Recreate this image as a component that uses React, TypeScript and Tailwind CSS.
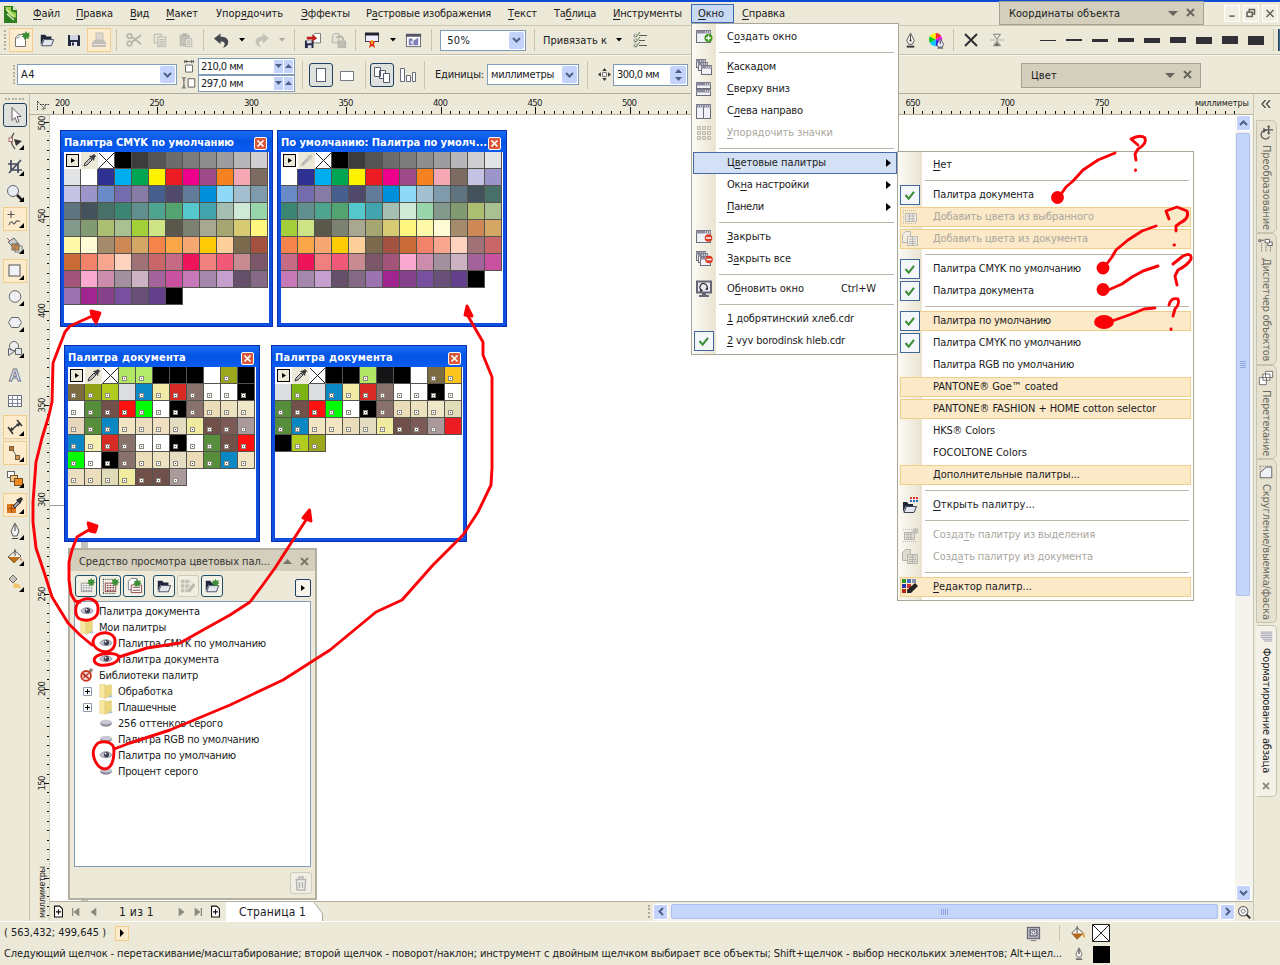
import { useLayoutEffect, useRef, type ReactNode } from "react";

/* ---------- text ---------- */

// "&" marks the access key: the letter after it is underlined.
function marked(s: string): ReactNode {
  const i = s.indexOf("&");
  if (i < 0) return s;
  return (
    <>
      {s.slice(0, i)}
      <span className="underline underline-offset-2 decoration-1">{s[i + 1]}</span>
      {s.slice(i + 2)}
    </>
  );
}

// A label whose letters are spaced to run over exactly `w` pixels.
function T({ s, w, vertical = false, className = "" }: { s: string; w: number; vertical?: boolean; className?: string }) {
  const ref = useRef<HTMLSpanElement>(null);
  useLayoutEffect(() => {
    const el = ref.current;
    if (!el) return;
    el.style.letterSpacing = "0px";
    const box = el.getBoundingClientRect();
    const size = vertical ? box.height : box.width;
    el.style.letterSpacing = (w - size) / (el.textContent || " ").length + "px";
  }, [s, w, vertical]);
  return (
    <span ref={ref} className={"inline-block shrink-0 whitespace-pre " + className}>
      {marked(s)}
    </span>
  );
}

/* ---------- icons, 18 x 18 ---------- */

const star = (x: number, y: number) => (
  <path d={`M${x} ${y - 4}l1.2 2.2 2.4-.6-.6 2.4 1.6 1-2.2.8.2 2.4-2.4-1-2 1.6-.4-2.4-2.4-.6 1.8-1.6-.8-2.2 2.4.2z`} fill="#3f8f3a" />
);
const win = (x: number, y: number, w: number, h: number) => (
  <>
    <rect x={x + 0.5} y={y + 0.5} width={w} height={h} fill="#f1f1f8" stroke="#6c6c7c" />
    <path d={`M${x} ${y + 2}h${w + 1}`} stroke="#8a8a9c" strokeWidth="3" />
    <path d={`M${x + w - 5} ${y + 2}h5`} stroke="#fff" strokeDasharray="1 1" />
  </>
);
const corner = <path d="M18 13v5h-5z" fill="#000" />;
const palGrid = (c: string) => (
  <>
    <rect x="3.5" y="6.5" width="11" height="9" fill="#fff" stroke={c} />
    <path d="M5 9h8M5 11.5h8M5 14h8" stroke={c} strokeWidth="1.6" strokeDasharray="2 1" />
  </>
);
const folderPath = (
  <>
    <path d="M2 15V3h5l1.5 2H14v3H5z" fill="#20263c" />
    <path d="M5.5 8.5h11L14 15.500H3z" fill="#e4e6ee" stroke="#3c4258" />
  </>
);
const docs = (c: string, f: string) => (
  <>
    <path d="M1.500 4.500l3-3h5v11h-8z" fill={f} stroke={c} />
    <path d="M6.500 6.500h10v9h-10zM8 9h7M8 11.500h7M8 13.500h7M11.500 7v8" fill={f} stroke={c} />
  </>
);

const ICONS: Record<string, ReactNode> = {
  logo: (
    <>
      <path d="M3 1h9l4 4v13H3z" fill="#2f7d23" />
      <path d="M4 2h6v4l5 2v5L8 10z" fill="#9ed04c" />
      <path d="M5 4l8 8M6 9l7 6" stroke="#dff3b8" strokeWidth="1.4" />
      <path d="M12 1l4 4h-4z" fill="#d9eccb" />
    </>
  ),
  newDoc: (
    <>
      <path d="M3.500 6.500l3-3h7v12h-10z" fill="#fff" stroke="#777" />
      <path d="M3.500 7h3.500V3.500" fill="none" stroke="#999" />
      {star(14, 4)}
    </>
  ),
  open: folderPath,
  save: (
    <>
      <path d="M3 4h11l1 1v10H3z" fill="#23283f" />
      <rect x="5" y="4" width="8" height="5" fill="#cfd3e2" />
      <rect x="6" y="11" width="6" height="4" fill="#e8eaf2" />
      <rect x="7" y="11.500" width="2" height="3" fill="#23283f" />
    </>
  ),
  print: (
    <>
      <path d="M6 2h7v7H6z" fill="#dad7d1" stroke="#c4c0b9" />
      <path d="M4 9h10l2 3v4H2v-4z" fill="#c2beb9" />
      <path d="M3 13.500h12" stroke="#e9e5de" />
    </>
  ),
  cut: (
    <g fill="none" stroke="#b5b3a9" strokeWidth="1.600">
      <path d="M16 4L7 11M16 13L7 6" />
      <circle cx="4.500" cy="5" r="2.300" />
      <circle cx="4.500" cy="12.500" r="2.300" />
    </g>
  ),
  copy: (
    <g fill="#e9e6dc" stroke="#b5b3a9">
      <path d="M2.500 2.500h8v10h-8z" />
      <path d="M6.500 5.500h9v11h-9zM8 8.500h6M8 10.500h6M8 12.500h6M8 14.500h6" />
    </g>
  ),
  paste: (
    <g stroke="#b5b3a9">
      <path d="M2.500 3.500h10v12h-10z" fill="#c4c1b8" />
      <path d="M5 3h5" strokeWidth="3" />
      <path d="M8.500 7.500h7v9h-7zM10 10h4M10 12h4M10 14h4" fill="#e9e6dc" />
    </g>
  ),
  undo: <path d="M1 7l7-5.500v3.500c5 0 9 2 8 7-.5 2.500-3 4.500-6 4.500 3-2 4-7-2-6.500V13z" fill="#46484e" />,
  redo: <path d="M17 7l-7-5.500v3.500c-5 0-9 2-8 7 .5 2.500 3 4.500 6 4.500-3-2-4-7 2-6.500V13z" fill="#c4c2b8" />,
  importI: (
    <>
      <path d="M9.500 3.500l2-2h6v10h-8z" fill="#fff" stroke="#777" />
      <rect x="1" y="9" width="9" height="8" fill="#23283f" />
      <rect x="3" y="9" width="5" height="3" fill="#dde" />
      <rect x="4" y="14" width="4" height="3" fill="#dde" />
      <path d="M3 7V5h6V2.500L14 6.500 9 10V8H3z" fill="#c41d1d" />
    </>
  ),
  exportI: (
    <g stroke="#b5b3a9">
      <path d="M2.500 3.500l2-2h5v10h-7z" fill="#e4e1d7" />
      <path d="M8.500 9.500h8v7h-8z" fill="#c0beb5" />
      <path d="M7 6c4-3 7-1 7 3" fill="none" strokeWidth="2" />
    </g>
  ),
  launcher: (
    <>
      <rect x="2.500" y="2.500" width="13" height="8" fill="#eef" stroke="#445" />
      <path d="M2 3h14" stroke="#223" strokeWidth="3" />
      <path d="M6 10h6l-1 3 1 4-3-2-3 2 1-4z" fill="#d93418" />
      <path d="M8 9h2v4H8z" fill="#f5a623" />
    </>
  ),
  welcome: (
    <>
      <rect x="1.500" y="2.500" width="15" height="13" fill="#fff" stroke="#667" />
      <path d="M1 3.500h16" stroke="#556" strokeWidth="3" />
      <path d="M4 7h4v7H4zM9 9l5-3v8H9z" fill="#7a7fb5" />
      <path d="M6 13V9l3 2z" fill="#dde" />
    </>
  ),
  checks: (
    <g fill="none" stroke="#555a52">
      <path d="M8 4.500h8M8 9.500h6M8 14.500h8" />
      <path d="M3 4l2 2 4-5M3 9l2 2 4-5M3 14l2 2 4-5" stroke="#59804f" />
      <path d="M3 3h3v3H3zM3 8h3v3H3zM3 13h3v3H3z" stroke="#999" strokeWidth=".7" />
    </g>
  ),
  pen: (
    <>
      <path d="M9 1l4 8-2 4H7L5 9z" fill="#f6f6f6" stroke="#555" />
      <path d="M9 3v7" stroke="#444" />
      <circle cx="9" cy="9" r="1.100" fill="#333" />
      <path d="M5 14.500h8v2H5z" fill="#333" />
    </>
  ),
  wheel: (
    <>
      <path d="M8 8V1a7 7 0 016 3.500z" fill="#ff2a2a" />
      <path d="M8 8l6-3.500a7 7 0 010 7z" fill="#f0f" />
      <path d="M8 8l6 3.500A7 7 0 018 15z" fill="#22f" />
      <path d="M8 8v7a7 7 0 01-6-3.500z" fill="#0cf" />
      <path d="M8 8l-6 3.500a7 7 0 010-7z" fill="#0c2" />
      <path d="M8 8L2 4.500A7 7 0 018 1z" fill="#fe0" />
      <path d="M13 7l3.500 6-1.500 3h-4l-1.500-3z" fill="#eef" stroke="#556" />
      <path d="M13 9v4M10 17h6" stroke="#334" />
    </>
  ),
  cross: <path d="M3 3l12 12M15 3L3 15" stroke="#2d2d33" strokeWidth="2" />,
  hourglass: (
    <g fill="none" stroke="#777">
      <path d="M5 2.500h8L9 8zM5 15.500h8L9 10z" />
      <path d="M1 9h16" stroke="#aaa" />
      <path d="M7 15l2-3 2 3z" fill="#444" />
    </g>
  ),
  pageW: <path d="M4.500 6.500h9v9h-9zM3.500 0v4M14.500 0v4M3 2h12M6 0v4M12 0v4" fill="#fff" stroke="#444" />,
  pageH: <path d="M8.500 4.500h8v10h-8zM1 3.500h5M1 15.500h5M3.500 4v11M2.500 6h2M2.500 13h2" fill="#fff" stroke="#444" />,
  portrait: <rect x="4.500" y="2.500" width="9" height="13" fill="#fff" stroke="#5a6072" />,
  landscape: <rect x="2.500" y="5.500" width="13" height="9" fill="#fff" stroke="#777c8c" />,
  pages: (
    <g fill="#fff" stroke="#555c70">
      <path d="M1.500 1.500h6v9h-6zM6.500 4.500h6v8h-6z" />
      <path d="M10.500 7.500h6v9h-6z" />
    </g>
  ),
  bars: <path d="M1.500 2.500h4v13h-4zM7.500 9.500h4v6h-4zM13.500 6.500h3v9h-3z" fill="#fff" stroke="#666c7c" />,
  nudge: (
    <>
      <rect x="6.500" y="6.500" width="5" height="5" fill="#fff" stroke="#444" />
      <path d="M9 0l3 4H6zM9 18l3-4H6zM0 9l4-3v6zM18 9l-4-3v6z" fill="#333" />
    </>
  ),
  pick: <path d="M6 1.500v13l3-3 2 5 2-1-2-5h4z" fill="#fdfdfd" stroke="#6c5a66" />,
  shape: (
    <>
      <path d="M8 1C4 6 4 11 9 17" fill="none" stroke="#555" strokeWidth="1.300" />
      <rect x="3" y="6" width="3.500" height="3.500" fill="#fff" stroke="#a66" />
      <path d="M8 7l8 2-6 5z" fill="#333" />
      {corner}
    </>
  ),
  crop: (
    <>
      <path d="M5 2v10h11M2 6h10v9M3 15L15 2" fill="none" stroke="#444a5c" strokeWidth="1.700" />
      {corner}
    </>
  ),
  zoom: (
    <>
      <circle cx="7" cy="7" r="5.500" fill="#e6ecf2" stroke="#667" />
      <path d="M11 11l5 5" stroke="#222" strokeWidth="2.500" />
      {corner}
    </>
  ),
  freehand: (
    <>
      <path d="M5 1v7M1.500 4.500h7M3 15c3-8 4 2 6-2s3-1 5-2" fill="none" stroke="#555" strokeWidth="1.100" />
      {corner}
    </>
  ),
  smart: (
    <>
      <path d="M2 6l6-4 4 5-6 3z" fill="#ccc" stroke="#666" />
      <path d="M1 2l3 3" stroke="#a55" />
      <rect x="6" y="8" width="7" height="6" fill="#dd8a3c" stroke="#666" />
      <rect x="9" y="10" width="7" height="6" fill="none" stroke="#777" />
      {corner}
    </>
  ),
  rect: (
    <>
      <rect x="3" y="3" width="11" height="11" fill="#f1f3fa" stroke="#555" />
      {corner}
    </>
  ),
  ellipse: (
    <>
      <circle cx="9" cy="8.500" r="5.800" fill="#eef0f6" stroke="#666" />
      {corner}
    </>
  ),
  polygon: (
    <>
      <path d="M5.500 3.500h7l3 5-3 5h-7l-3-5z" fill="#eef0f6" stroke="#666" />
      {corner}
    </>
  ),
  basic: (
    <>
      <circle cx="8" cy="6" r="4.500" fill="#eee" stroke="#666" />
      <path d="M2.500 8.500l6 3-6 4zM9.500 8.500h6v6h-6z" fill="#e4e6ee" stroke="#666" />
      {corner}
    </>
  ),
  textA: (
    <text x="9" y="15" textAnchor="middle" fontSize="17" fontWeight="bold" fill="#f4f6fa" stroke="#69708a" strokeWidth=".9" fontFamily="Liberation Sans">
      A
    </text>
  ),
  table: (
    <>
      <rect x="2.500" y="3.500" width="13" height="11" fill="#fff" stroke="#666c80" />
      <path d="M2 7.500h14M2 11.500h14M6.500 3v12M11.500 3v12" stroke="#7d849a" />
    </>
  ),
  dimension: (
    <>
      <path d="M4 13L14 5M2 9l5 7M11 2l5 6" stroke="#333" strokeWidth="1.500" />
      <path d="M4 13l1-4 3 3zM14 5l-1 4-3-3z" fill="#333" />
      {corner}
    </>
  ),
  connector: (
    <>
      <path d="M6 5l6 9" stroke="#666" />
      <rect x="3.500" y="2.500" width="4" height="4" fill="#b5793a" stroke="#7d5a34" />
      <rect x="9.500" y="11.500" width="4" height="4" fill="#d49a55" stroke="#7d5a34" />
      {corner}
    </>
  ),
  blend: (
    <>
      <rect x="1.500" y="1.500" width="7" height="6" fill="#fff" stroke="#666" />
      <rect x="4.500" y="5.500" width="7" height="6" fill="#f6c888" stroke="#75532a" />
      <rect x="8.500" y="8.500" width="8" height="7" fill="#f08a1c" stroke="#75532a" />
      {corner}
    </>
  ),
  dropper: (
    <>
      <rect x="1" y="8" width="9" height="9" fill="#d9781d" />
      <path d="M1 12.500h9M5.500 8v9" stroke="#a54f0c" />
      <path d="M7 10l5-5 2 2-5 5z" fill="#99a" stroke="#333" />
      <path d="M10 4l5-3 2 2-3 5z" fill="#333" />
      {corner}
    </>
  ),
  pen2: (
    <>
      <path d="M9 1l4 8-2 5H7L5 9z" fill="#f4f4f4" stroke="#555" />
      <path d="M9 3v6M6 16.500h6" stroke="#444" />
      {corner}
    </>
  ),
  penS: (
    <>
      <path d="M9 1l4 8-2 4H7L5 9z" fill="#f4f4f4" stroke="#555" />
      <path d="M9 3v6M5 15.500h8" stroke="#444" strokeWidth="1.500" />
    </>
  ),
  bucket: (
    <>
      <path d="M2 9l7-6 6 5-7 7z" fill="#f6f2ea" stroke="#555" />
      <path d="M2 9h12l-6 6z" fill="#c27018" />
      <path d="M9 1v7" stroke="#444" />
      <path d="M15 9l1 4-2-1z" fill="#c27018" />
      {corner}
    </>
  ),
  bucket2: (
    <>
      <path d="M3 5l4-4 4 4-4 4z" fill="#c9c4b8" stroke="#666" />
      <path d="M8 9l5 1 2 4H7z" fill="#f1c46a" />
      {corner}
    </>
  ),
  newWin: (
    <>
      {win(1, 2, 14, 12)}
      <circle cx="13.500" cy="10" r="4" fill="#3f9a1c" />
      <path d="M13.500 7.500v5M11 10h5" stroke="#fff" strokeWidth="1.300" />
    </>
  ),
  cascade: (
    <>
      {win(1, 1, 9, 8)}
      {win(3, 4, 9, 8)}
      {win(6, 7, 10, 9)}
    </>
  ),
  tileH: (
    <>
      {win(1, 2, 14, 6)}
      {win(1, 9, 14, 6)}
    </>
  ),
  tileV: (
    <>
      {win(1, 2, 7, 14)}
      {win(8, 2, 7, 14)}
    </>
  ),
  arrange: (
    <g fill="#e6e2d6" stroke="#bdb9ad">
      <path d="M2.500 2.500h3v3h-3zM7.500 2.500h3v3h-3zM12.500 2.500h3v3h-3zM2.500 7.500h3v3h-3zM7.500 7.500h3v3h-3zM12.500 7.500h3v3h-3zM2.500 12.500h3v3h-3zM7.500 12.500h3v3h-3zM12.500 12.500h3v3h-3z" />
    </g>
  ),
  closeWin: (
    <>
      {win(1, 2, 14, 12)}
      <circle cx="13.500" cy="10" r="3.800" fill="#dc3a22" />
      <path d="M11 10h5" stroke="#fff" strokeWidth="1.500" />
    </>
  ),
  closeAll: (
    <>
      {win(1, 1, 9, 9)}
      {win(3, 3, 9, 9)}
      {win(5, 6, 10, 9)}
      <circle cx="14" cy="9.500" r="3.800" fill="#dc3a22" />
      <path d="M11.500 9.500h5" stroke="#fff" strokeWidth="1.500" />
    </>
  ),
  refresh: (
    <>
      <rect x="2" y="1.500" width="14" height="11" fill="#e8e8f2" stroke="#667" strokeWidth="2" />
      <path d="M6.500 10a3.500 3.500 0 115-1" fill="none" stroke="#333" strokeWidth="1.200" />
      <path d="M5 8.500l3 2-3 2zM13 7l0 3-3-.5z" fill="#333" />
      <path d="M7 13h4v2H7zM4 15h10v2H4z" fill="#667" />
    </>
  ),
  addSel: (
    <>
      <path d="M2 2.500h14M2 15.500h14M2.500 2v14" stroke="#c9c0ae" strokeDasharray="1 1" fill="none" />
      <path d="M4.500 5.500h11v8h-11zM6 8h8M6 11h8M8.500 6v7M12 6v7" stroke="#bab6b2" fill="#f0eee8" />
    </>
  ),
  addDoc: docs("#bab6b2", "#f0ece2"),
  openPal: (
    <>
      <path d="M2 16V6h4l1.500 2H12v2H5z" fill="#20263c" />
      <path d="M5.500 10.500h10L13 16.500H3z" fill="#e4e6ee" stroke="#3c4258" />
      <path d="M9 2h8" stroke="#d33" strokeWidth="2" strokeDasharray="2 1" />
      <path d="M9 5h8" stroke="#36c" strokeWidth="2" strokeDasharray="2 1" />
    </>
  ),
  mkSel: (
    <>
      <path d="M2 3.500h12M2 15.500h14" stroke="#b9b7af" strokeDasharray="1 1" />
      <path d="M3.500 6.500h10v7h-10zM5 8.500h7M5 11.500h7M7 7v6M10 7v6" stroke="#b5b3ac" fill="#e2e0d8" />
      <circle cx="14.500" cy="5" r="3" fill="#c2c0b8" />
    </>
  ),
  mkDoc: docs("#b5b3ac", "#dddad0"),
  palEdit: (
    <>
      <path d="M1 3h4" stroke="#2a9a2a" strokeWidth="4" />
      <path d="M6 3h4" stroke="#4a6ac8" strokeWidth="4" />
      <path d="M11 3h4" stroke="#8893b0" strokeWidth="4" />
      <path d="M1 8h4" stroke="#2632b0" strokeWidth="4" />
      <path d="M6 8h4" stroke="#c83232" strokeWidth="4" />
      <path d="M1 13h4" stroke="#b02a12" strokeWidth="4" />
      <path d="M6 13h4" stroke="#7a2a4a" strokeWidth="4" />
      <path d="M6 15l1-4 7-6 3 3-7 7z" fill="#222" />
    </>
  ),
  dNew: (
    <>
      {palGrid("#999")}
      {star(14, 5)}
    </>
  ),
  dSel: (
    <>
      <path d="M1 2.500h14M1 17.500h14M1.500 2v15" stroke="#333" strokeDasharray="1 1" fill="none" />
      {palGrid("#8a4a4a")}
      {star(14, 5)}
    </>
  ),
  dDoc: (
    <>
      <path d="M2.500 4.500l3-3h6v12h-9z" fill="#fff" stroke="#778" />
      <path d="M5.500 8.500h11v8h-11zM7 11h8M7 14h8" fill="#fff" stroke="#8a4a4a" />
      {star(12, 6)}
    </>
  ),
  dEdit: (
    <g stroke="#c4c0b4">
      <path d="M1 4h11M1 9h11M1 14h9" strokeWidth="4" strokeDasharray="4 1" />
      <path d="M9 14l6-8 2 2-6 8z" fill="#b9b5a9" />
    </g>
  ),
  dFolder: (
    <>
      {folderPath}
      {star(13, 5)}
    </>
  ),
  trash: <path d="M3.500 5.500h11M7 5V3h4v2M4.500 6l.5 10h8l.5-10M7.500 8v6M10.500 8v6" fill="none" stroke="#b5b5b9" strokeWidth="1.500" />,
  eye: (
    <>
      <path d="M2 9c3-5 11-5 14 0-3 4-11 4-14 0z" fill="#c4c4d4" stroke="#8c8c9a" />
      <circle cx="9.500" cy="8.500" r="3" fill="#3d3d4d" />
      <circle cx="8.500" cy="7.500" r="1" fill="#fff" />
    </>
  ),
  lid: (
    <>
      <ellipse cx="9" cy="9.500" rx="6.500" ry="3.800" fill="#8c8c9c" />
      <ellipse cx="9" cy="8" rx="6.500" ry="2.700" fill="#c8c8d4" />
    </>
  ),
  folder: (
    <>
      <path d="M2 2l6-1v16l-6-1z" fill="#f7e9a0" stroke="#e0cd7c" strokeWidth=".6" />
      <path d="M8 3l7-1v13l-7 2z" fill="#ecd67c" stroke="#d9c067" strokeWidth=".6" />
      <path d="M12 14h4v2h-4z" fill="#a9c4de" />
    </>
  ),
  lib: (
    <>
      <path d="M13 1l3 2-4 6-3-2z" fill="#8c8478" />
      <circle cx="8" cy="10" r="5.500" fill="#f2d9cf" stroke="#c8351d" strokeWidth="2" />
      <path d="M4 7l8 7" stroke="#c8351d" strokeWidth="2" />
      <path d="M5 12l6-5" stroke="#a33" strokeWidth="1.500" />
    </>
  ),
  addPage: <path d="M3.500 1.500h7l4 4v11h-11zM9 6v7M5.500 9.500h7" fill="#fff" stroke="#111" strokeWidth="1.500" />,
  loupe: (
    <>
      <circle cx="8" cy="8" r="6" fill="#f4f4f4" stroke="#555" strokeWidth="1.300" />
      <path d="M8 5l3 3-3 3-3-3z" fill="none" stroke="#555" />
      <path d="M12 12l5 5" stroke="#333" strokeWidth="2.500" />
    </>
  ),
  monitor: (
    <>
      <rect x="2.500" y="2.500" width="13" height="12" fill="#b5b3c0" stroke="#556" />
      <rect x="5.500" y="5" width="7" height="6.500" fill="#fff" stroke="#445" />
      <circle cx="9" cy="8" r="1.800" fill="none" stroke="#445" />
      <path d="M6 16.500h6" stroke="#777" />
    </>
  ),
  bucketS: (
    <>
      <path d="M2 9l6-6 7 6-7 7z" fill="#f6f2ea" stroke="#555" />
      <path d="M2 9.500h13l-7 6.500z" fill="#b5651a" />
      <path d="M8 1v8" stroke="#444" />
      <path d="M15 9l1 5" stroke="#e0a030" strokeWidth="2" />
    </>
  ),
  transform: (
    <>
      <path d="M7 6a5 5 0 106 7M12 1v9M8 5.500h9" fill="none" stroke="#555" strokeWidth="1.400" />
      <path d="M6 3l4 3-4 3zM12 0l2 2.500h-4zM12 11l2-2.500h-4z" fill="#555" />
    </>
  ),
  objects: (
    <>
      <path d="M2 2.500h5M11 4.500h5v4h-5z" stroke="#555" fill="#fff" />
      <path d="M8 1.500h5v4H8zM1 2h2v2H1z" fill="#fff" stroke="#555" />
      <path d="M4 6v10M9 8v8M14 10v6" stroke="#555" strokeDasharray="1 1" />
    </>
  ),
  steps: <path d="M8.500 1.500h8v7h-8zM5.500 4.500h8v7h-8zM1.500 8.500h8v8h-8z" fill="#fff" stroke="#666" />,
  fillet: (
    <>
      <path d="M2 2.500h14M2.500 2v7" stroke="#777" strokeDasharray="1 1" />
      <path d="M2.500 15.500v-6l7-6h6v12z" fill="#f0f0f8" stroke="#555" />
    </>
  ),
  lines: <path d="M3 3.500h13M3 5.500h13M3 7.500h13M3 9.500h13M5 11.500h11M7 13.500h9" stroke="#9a98b5" />,
};

function Icon({ n, className = "size-[18px]" }: { n: string; className?: string }) {
  return (
    <svg viewBox="0 0 18 18" className={"shrink-0 overflow-visible " + className}>
      {ICONS[n]}
    </svg>
  );
}

/* ---------- small controls ---------- */

function Slot({ c, children }: { c: string; children?: ReactNode }) {
  return <div className={"flex h-full shrink-0 items-center justify-center " + c}>{children}</div>;
}
const Sep = ({ c, h = "h-[22px]" }: { c: string; h?: string }) => (
  <Slot c={c}>
    <div className={"w-px bg-[#c9c5b2] " + h} />
  </Slot>
);
const Down = ({ c, dim = false }: { c: string; dim?: boolean }) => (
  <Slot c={c}>
    <svg viewBox="0 0 6 4" className="h-[4px] w-[6px]">
      <path d="M0 0h6L3 3.500z" fill={dim ? "#aaa79a" : "#000"} />
    </svg>
  </Slot>
);
function Chevron({ up = false, c = "h-[6px] w-[9px]" }: { up?: boolean; c?: string }) {
  return (
    <svg viewBox="0 0 9 6" className={c}>
      <path d={up ? "M1 5l3.500-3.500L8 5" : "M1 1l3.500 3.500L8 1"} fill="none" stroke="#4d6185" strokeWidth="2" />
    </svg>
  );
}
function Combo({ s, tw, c }: { s: string; tw: number; c: string }) {
  return (
    <div className={"flex h-[21px] shrink-0 items-center border border-[#7f9db9] bg-white " + c}>
      <T s={s} w={tw} className="ml-[3px] pt-px" />
      <div className="mr-px ml-auto flex h-[17px] w-[15px] items-center justify-center rounded-[2px] bg-[#c3d3fb]">
        <Chevron />
      </div>
    </div>
  );
}
function Spin({ s }: { s: string }) {
  return (
    <div className="flex h-[17px] w-[97px] items-center border border-[#7f9db9] bg-white">
      <T s={s} w={42} className="ml-[2px] pt-px" />
      <div className="ml-auto flex h-[13px] w-[9px] items-center justify-center bg-[#c3d3fb]">
        <svg viewBox="0 0 7 4" className="h-[4px] w-[7px]"><path d="M0 0h7L3.500 4z" fill="#4d6185" /></svg>
      </div>
      <div className="mx-px flex h-[13px] w-[9px] items-center justify-center bg-[#c3d3fb]">
        <svg viewBox="0 0 7 4" className="h-[4px] w-[7px]"><path d="M0 4h7L3.500 0z" fill="#4d6185" /></svg>
      </div>
    </div>
  );
}
const Grip = () => (
  <div className="flex h-[20px] flex-col justify-between">
    {[0, 1, 2, 3, 4, 5].map((i) => (
      <div key={i} className="size-[2px] bg-[#b5b19e]" />
    ))}
  </div>
);
const HOT = "border border-[#f0cd8a] bg-[#fcebcc]";
const DOWN = "rounded-[3px] border border-[#1f3f66] bg-[#dfe1dc]";

function DockTitle({ s, w, c }: { s: string; w: number; c: string }) {
  return (
    <div className={"flex shrink-0 items-center border border-[#a5a294] bg-[#d3cfbc] pl-[9px] " + c}>
      <T s={s} w={w} className="pt-px" />
      <svg viewBox="0 0 28 10" className="mr-[7px] ml-auto h-[10px] w-[28px]">
        <path d="M0 3h10L5 8z" fill="#66645c" />
        <path d="M19 1l7 7M26 1l-7 7" stroke="#66645c" strokeWidth="1.800" />
      </svg>
    </div>
  );
}

/* ---------- top bars ---------- */

const MENU: [string, number, string][] = [
  ["&Файл", 27, "w-[43px]"],
  ["&Правка", 37, "w-[54px]"],
  ["&Вид", 19, "w-[36px]"],
  ["&Макет", 32, "w-[50px]"],
  ["Упор&ядочить", 67, "w-[85px]"],
  ["&Эффекты", 49, "w-[65px]"],
  ["Р&астровые изображения", 125, "w-[142px]"],
  ["&Текст", 29, "w-[46px]"],
  ["Та&блица", 42, "w-[59px]"],
  ["&Инструменты", 69, "w-[78px]"],
];

function MenuBar() {
  return (
    <div className="flex h-[24px] shrink-0 items-center border-b border-[#cbc7b5]">
      <div className="w-[33px] pl-px">
        <Icon n="logo" />
      </div>
      {MENU.map(([s, w, c]) => (
        <div key={s} className={"shrink-0 pt-px " + c}>
          <T s={s} w={w} />
        </div>
      ))}
      <div className="flex h-[19px] w-[43px] items-center border border-[#3f66b5] bg-[#c9daf5] pt-px pl-[6px]">
        <T s="&Окно" w={26} />
      </div>
      <T s="&Справка" w={43} className="ml-[8px] pt-px" />
      <DockTitle s="Координаты объекта" w={111} c="mb-[1px] ml-auto h-[24px] w-[205px]" />
      <div className="mr-[2px] ml-[20px] flex gap-[3px]">
        {["M5 11h6", "M3.500 6.500h6v5h-6zM6 6V3.500h6v5h-2", "M4 4l8 8M12 4l-8 8"].map((d) => (
          <svg key={d} viewBox="0 0 16 16" className="h-[17px] w-[16px] border border-white bg-[#f1efe3]">
            <path d={d} fill="none" stroke="#66645c" strokeWidth="1.800" />
          </svg>
        ))}
      </div>
    </div>
  );
}

const LINES = ["h-[1px]", "h-[2px]", "h-[3px]", "h-[4px]", "h-[5px]", "h-[6px]", "h-[7px]", "h-[8px]", "h-[9px]"];

function Toolbar() {
  return (
    <div className="flex h-[29px] shrink-0 items-center border-b border-[#c6c2b0]">
      <Slot c="w-[9px]">
        <Grip />
      </Slot>
      <div className={"flex h-[24px] w-[24px] shrink-0 items-center justify-center " + HOT}>
        <Icon n="newDoc" />
      </div>
      <Slot c="w-[27px]"><Icon n="open" className="size-[16px]" /></Slot>
      <Slot c="w-[27px]"><Icon n="save" /></Slot>
      <div className={"flex h-[24px] w-[24px] shrink-0 items-center justify-center " + HOT}>
        <Icon n="print" />
      </div>
      <Sep c="w-[10px]" />
      <Slot c="w-[26px]"><Icon n="cut" /></Slot>
      <Slot c="w-[26px]"><Icon n="copy" className="size-[16px]" /></Slot>
      <Slot c="w-[26px]"><Icon n="paste" className="size-[16px]" /></Slot>
      <Sep c="w-[8px]" />
      <Slot c="w-[28px]"><Icon n="undo" className="size-[17px]" /></Slot>
      <Down c="w-[14px]" />
      <Slot c="w-[26px]"><Icon n="redo" className="size-[16px]" /></Slot>
      <Down c="w-[14px]" dim />
      <Sep c="w-[10px]" />
      <Slot c="w-[26px]"><Icon n="importI" className="size-[17px]" /></Slot>
      <Slot c="w-[26px]"><Icon n="exportI" className="size-[17px]" /></Slot>
      <Sep c="w-[8px]" />
      <Slot c="w-[26px]"><Icon n="launcher" /></Slot>
      <Down c="w-[16px]" />
      <Slot c="w-[24px]"><Icon n="welcome" className="size-[17px]" /></Slot>
      <Sep c="w-[12px]" />
      <Combo s=" 50%" tw={26} c="ml-[3px] w-[86px]" />
      <Sep c="w-[17px]" />
      <T s="Привязать к" w={64} className="pt-px" />
      <Down c="w-[24px]" />
      <Slot c="w-[18px]"><Icon n="checks" /></Slot>
      <div className="flex h-full flex-1 items-center justify-end">
        <Slot c="w-[26px]"><Icon n="pen" className="size-[17px]" /></Slot>
        <Slot c="w-[26px]"><Icon n="wheel" className="size-[17px]" /></Slot>
        <Sep c="w-[9px]" />
        <Slot c="w-[26px]"><Icon n="cross" /></Slot>
        <Slot c="mr-[25px] w-[26px]"><Icon n="hourglass" className="size-[16px]" /></Slot>
        {LINES.map((h) => (
          <Slot key={h} c="w-[26px]">
            <div className={"w-[16px] bg-[#303036] " + h} />
          </Slot>
        ))}
        <Sep c="w-[9px]" />
        <div className="h-[22px] w-[2px] border-l border-[#1f3f66] bg-[#3d6b80]" />
      </div>
    </div>
  );
}

function PropertyBar() {
  return (
    <div className="flex h-[39px] shrink-0 items-center border-t border-b border-t-[#f8f6ee] border-b-[#b0ad9c]">
      <Slot c="w-[17px] justify-end pr-[2px]">
        <Grip />
      </Slot>
      <Combo s="A4" tw={14} c="w-[160px]" />
      <div className="flex w-[21px] flex-col items-center gap-px pl-[2px]">
        <Icon n="pageW" className="size-[14px]" />
        <Icon n="pageH" className="size-[15px]" />
      </div>
      <div className="flex flex-col">
        <Spin s="210,0 мм" />
        <Spin s="297,0 мм" />
      </div>
      <Sep c="w-[14px]" h="h-[28px]" />
      <div className={"flex size-[24px] shrink-0 items-center justify-center " + DOWN}>
        <Icon n="portrait" className="size-[18px]" />
      </div>
      <Slot c="w-[27px]"><Icon n="landscape" className="size-[18px]" /></Slot>
      <Sep c="w-[10px]" h="h-[28px]" />
      <div className={"flex size-[24px] shrink-0 items-center justify-center " + DOWN}>
        <Icon n="pages" className="size-[18px]" />
      </div>
      <Slot c="w-[27px]"><Icon n="bars" className="size-[18px]" /></Slot>
      <Sep c="mr-[8px] w-[6px]" h="h-[28px]" />
      <T s="Единицы:" w={49} className="pt-px" />
      <Combo s="миллиметры" tw={63} c="ml-[3px] w-[92px]" />
      <Sep c="w-[17px]" h="h-[28px]" />
      <Slot c="w-[17px]"><Icon n="nudge" className="size-[13px]" /></Slot>
      <div className="flex h-[22px] w-[75px] shrink-0 items-center border border-[#7f9db9] bg-white">
        <T s="300,0 мм" w={42} className="ml-[3px]" />
        <div className="mr-px ml-auto flex h-[18px] w-[16px] flex-col items-center justify-between rounded-[2px] bg-[#c3d3fb] py-[3px]">
          <svg viewBox="0 0 7 4" className="h-[4px] w-[7px]"><path d="M0 4h7L3.500 0z" fill="#4d6185" /></svg>
          <svg viewBox="0 0 7 4" className="h-[4px] w-[7px]"><path d="M0 0h7L3.500 4z" fill="#4d6185" /></svg>
        </div>
      </div>
      <DockTitle s="Цвет" w={26} c="mt-px mr-[79px] ml-auto h-[25px] w-[180px]" />
    </div>
  );
}

/* ---------- rulers ---------- */

const STEP = 9.45;
const LABELS_H: [number, number][] = [
  [200, 0], [250, 1], [300, 2], [350, 3], [400, 4], [450, 5], [500, 6], [650, 9], [700, 10], [750, 11],
];
const LABELS_V = [500, 450, 400, 350, 300, 250, 200, 150];

function RulerH() {
  return (
    <svg width="1223" height="21" className="block shrink-0 text-[9.5px]">
      <path d="M0 20.500h1223" stroke="#b3b0a0" />
      <path d="M7.500 7v9M10 10.500h9M8 8l7 7M15 11v4h-4" stroke="#333" strokeDasharray="1.500 1" fill="none" />
      {Array.from({ length: 126 }, (_, i) => {
        const x = Math.round(32.5 + (i - 1) * STEP) + 0.5;
        return <path key={i} d={`M${x} ${(i - 1) % 10 === 0 ? 13 : 17}V20`} stroke="#111" />;
      })}
      {LABELS_H.map(([n, i]) => (
        <text key={n} x={32.5 + i * 94.5} y="12" textAnchor="middle" textLength="15" fill="#222">
          {n}
        </text>
      ))}
      <text x="1165" y="12" fill="#222" className="text-[9px]" textLength="54" lengthAdjust="spacing">
        миллиметры
      </text>
    </svg>
  );
}

function RulerV() {
  return (
    <svg width="20" height="807" className="block shrink-0 text-[9.5px]">
      <path d="M20 0v807" stroke="#b3b0a0" />
      {Array.from({ length: 85 }, (_, i) => {
        const y = Math.round(6.5 + i * STEP) + 0.5;
        return <path key={i} d={`M${i % 10 === 0 ? 14 : 17} ${y}H19`} stroke="#111" />;
      })}
      {LABELS_V.map((n, i) => (
        <text key={n} transform={`translate(14.500 ${i === 0 ? 8 : 6.5 + i * 94.5}) rotate(-90)`} textAnchor="middle" textLength="15" fill="#222">
          {n}
        </text>
      ))}
      <text transform="translate(14.500 803) rotate(-90)" fill="#222" className="text-[9px]" textLength="52" lengthAdjust="spacing">
        миллиметры
      </text>
    </svg>
  );
}

/* ---------- palettes ---------- */

const CMYK =
  "000 3c3c3c 545454 6c6c6c 7c7c7c 8e8e8e 9d9d9f b7b7b9 cfcfd1 " +
  "e3e4e6 fff 2e3192 00aeef 00a651 fff200 ed1c24 ec008c 9e4a88 f58220 f5a8b4 7d6b62 " +
  "c4c3e3 9b95c9 6a8ac7 756cae 857ba5 465f8f 50496c 627b99 0090d9 8ed8f8 a3bfd0 7f9bab " +
  "60747f 44535b 487068 3a8672 618f8d 4fa490 54a472 55c8ce 42a5ad a5bfb2 cee9d6 98d5ab " +
  "82998c 829a72 abbe72 a9c093 a3cf3b cde386 59584a 7d8172 a8a792 a6a673 d6cb73 fef67f " +
  "fdf9a9 fffcd5 a38b6b cd8856 d4a864 f4844b fba749 f5a872 ffcb05 fdd09b 7c6a4e a35241 " +
  "c86b36 f2836a faa58f fdd3bf a07176 c8666a c56b86 ed145b f08080 f05a78 c98b92 7c5669 " +
  "a25579 f9a8cf cb8dab a2909e cdb2c3 a4649b c9519f c579b6 a388ac c59fcd 64506a 846a87 " +
  "9b73b0 a02590 85428a 7751a0 685078 62408c 000";
// "*" marks a spot colour.
const DOC_A =
  "b2e665* b5eb6a* 000 000 000 fff 9ba81b* 000 " +
  "7d6c42* 93a317* b2cc1e* dcdde0 0a88c4* f1eba7* d92b26* 8a726c* fff* fff* 000* " +
  "fff* 568e3b* 73514b* f11* 0f0* fff* 000* 8a726c* ecddb9* ede2bf* f0e6c8* " +
  "e6d6ba* 568e3b* 0a88c4* f3e5c3* ebdfc0* f0dfc0* e4dcc0* f1eba0* 705048* 7c5b57* aa9a9b* " +
  "0a88c4* f5efb4* d92b26* 8a726c* fff* fff* 000* fff* 568e3b* 73514b* f11* " +
  "0f0* fff* 000* 8a726c* ecddb9* ede2bf* e6dcc2* ebdcb7* 568e3b* 0a88c4* f3e5c3* " +
  "eadfc0* ebdcbc* e0dcb8* f1eba0* 705048* 70504a* aa9a9b*";
const DOC_B =
  "000 000 b2e665* 151518 000 fff 7d6c42* fbc51c* " +
  "dcdde0 7ab514* dcdde0 0a88c4* f1eba7* d92b26* 8a726c* fff* fff* 000* fff* " +
  "568e3b* 73514b* f11* 0f0* fff* 000* 8a726c* ecddb9* ede2bf* f0e6c8* e0dcb8* " +
  "568e3b* 0a88c4* f3e5c3* f3e5c3* ebdcbc* e4dcc0* f1eba0* 70504a* 7c5b57* aa9a9b* ed1c24 " +
  "000 b2cc1e* 9ba81b*";

function PaletteWindow({ title, tw, colors, c, dim = false }: { title: string; tw: number; colors: string; c: string; dim?: boolean }) {
  const cell = "size-[17px] border-r border-b border-[#55534e]";
  const ink = dim ? "#c9c6bb" : "#3a3d40";
  return (
    <div className={"absolute flex h-[197px] flex-col border border-[#0a2fae] bg-[#0f4fe0] px-[3px] pb-[3px] " + c}>
      <div className="-mx-[3px] flex h-[21px] shrink-0 items-center bg-linear-to-b from-[#1a6cf5] via-[#0453e4] to-[#0a5cf2] pr-[5px] pl-[3px] pt-[3px] font-bold text-white">
        <T s={title} w={tw} />
        <svg viewBox="0 0 13 13" className="ml-auto size-[13px]">
          <rect x=".5" y=".5" width="12" height="12" rx="1.500" fill="#d9583a" stroke="#fff" />
          <path d="M3.500 3.500l6 6M9.500 3.500l-6 6" stroke="#fff" strokeWidth="1.700" />
        </svg>
      </div>
      <div className="flex flex-1 flex-wrap content-start bg-white">
        <svg viewBox="0 0 17 17" className="size-[17px]">
          <rect x="2.500" y="2.500" width="12" height="12" fill="#ece9d8" stroke="#000" />
          <path d="M7 6l4 2.500-4 2.500z" />
        </svg>
        <svg viewBox="0 0 17 17" className="size-[17px] bg-[#ece9d8]">
          <path d="M3 14l1-3 5-5 2 2-5 5z" fill="#bbb" stroke={ink} />
          <path d="M8 4l5 5 .5-3L15 4l-2-2-2 1.500z" fill={ink} />
        </svg>
        <svg viewBox="0 0 17 17" className="size-[17px] bg-white">
          <path d="M1 1l15 15M16 1L1 16" stroke="#222" />
          <path d="M16.500 0v16.500H0" stroke="#55534e" fill="none" />
        </svg>
        {colors.split(" ").map((v, i) => (
          <div key={i} className={cell + " flex items-end pb-[2px] pl-[3px]"} style={{ backgroundColor: "#" + v.replace("*", "") }}>
            {v.endsWith("*") && (
              <div className="flex size-[5px] items-center justify-center border border-[#8e8a80] bg-white">
                <div className="size-px bg-[#444]" />
              </div>
            )}
          </div>
        ))}
      </div>
    </div>
  );
}

/* ---------- palette browser ---------- */

const TREE: [string, string, string, number, boolean?][] = [
  ["pl-[4px]", "eye", "Палитра документа", 101],
  ["pl-[4px]", "folder", "Мои палитры", 67],
  ["pl-[23px]", "eye", "Палитра CMYK по умолчанию", 148],
  ["pl-[23px]", "eye", "Палитра документа", 101],
  ["pl-[4px]", "lib", "Библиотеки палитр", 99],
  ["pl-[8px]", "folder", "Обработка", 55, true],
  ["pl-[8px]", "folder", "Плашечные", 58, true],
  ["pl-[23px]", "lid", "256 оттенков серого", 105],
  ["pl-[23px]", "lid", "Палитра RGB по умолчанию", 141],
  ["pl-[23px]", "eye", "Палитра по умолчанию", 118],
  ["pl-[23px]", "lid", "Процент серого", 80],
];

function Browser() {
  const btn = "flex size-[22px] items-center justify-center rounded-[3px] border border-[#1f5069] bg-[#f3f1e6]";
  return (
    <div className="absolute top-[548px] left-[68px] flex h-[352px] w-[249px] flex-col border-2 border-[#b3b09f] bg-[#ece9d8]">
      <div className="flex h-[21px] shrink-0 items-center bg-[#d3cfbc] pt-[2px] pl-[9px] text-[#333]">
        <T s="Средство просмотра цветовых пал..." w={191} />
        <svg viewBox="0 0 28 10" className="mr-[4px] ml-auto h-[10px] w-[28px]">
          <path d="M0 7h9L4.500 2z" fill="#77756b" />
          <path d="M18 1l7 7M25 1l-7 7" stroke="#77756b" strokeWidth="1.800" />
        </svg>
      </div>
      <div className="flex h-[29px] shrink-0 items-center gap-[2px] pl-[5px]">
        {["dNew", "dSel", "dDoc"].map((n) => (
          <div key={n} className={btn}><Icon n={n} className="size-[17px]" /></div>
        ))}
        <div className={btn + " ml-[6px]"}><Icon n="open" className="size-[16px]" /></div>
        <div className="flex size-[22px] items-center justify-center rounded-[3px] border border-[#d0ccbb] bg-[#f1eee2]"><Icon n="dEdit" className="size-[16px]" /></div>
        <div className={btn}><Icon n="dFolder" className="size-[16px]" /></div>
        <div className="mt-[4px] mr-[4px] ml-auto flex h-[18px] w-[16px] items-center justify-center rounded-[2px] border border-[#1f3f66] bg-[#f6f4ea]">
          <svg viewBox="0 0 4 6" className="h-[6px] w-[4px]"><path d="M0 0l4 3-4 3z" /></svg>
        </div>
      </div>
      <div className="mx-[4px] mt-[1px] h-[266px] shrink-0 border border-[#7f9db9] bg-white pt-px">
        {TREE.map(([pad, icon, s, w, plus], i) => (
          <div key={i} className={"flex h-[16px] items-center gap-[4px] " + pad}>
            {plus && (
              <svg viewBox="0 0 9 9" className="mr-[2px] size-[9px]">
                <path d="M.5.5h8v8h-8z" fill="#fff" stroke="#8f9bb0" />
                <path d="M2 4.500h5M4.500 2v5" stroke="#000" />
              </svg>
            )}
            <Icon n={icon} className="size-[16px]" />
            <T s={s} w={w} className="pt-px" />
          </div>
        ))}
      </div>
      <div className="mt-[5px] mr-[3px] flex size-[22px] items-center justify-center self-end rounded-[3px] border border-[#cfccbd] bg-[#f1efe4]">
        <Icon n="trash" />
      </div>
    </div>
  );
}

/* ---------- menus ---------- */

type Item = { s: string; w: number; icon?: string; check?: boolean; hot?: boolean; sel?: boolean; off?: boolean; sub?: boolean; key?: string } | null;

const WINDOW_MENU: Item[] = [
  { s: "С&оздать окно", w: 70, icon: "newWin" },
  null,
  { s: "&Каскадом", w: 49, icon: "cascade" },
  { s: "&Сверху вниз", w: 63, icon: "tileH" },
  { s: "С&лева направо", w: 76, icon: "tileV" },
  { s: "&Упорядочить значки", w: 106, icon: "arrange", off: true },
  null,
  { s: "Ц&ветовые палитры", w: 99, sel: true, sub: true },
  { s: "Ок&на настройки", w: 82, sub: true },
  { s: "&Панели", w: 37, sub: true },
  null,
  { s: "&Закрыть", w: 44, icon: "closeWin" },
  { s: "З&акрыть все", w: 64, icon: "closeAll" },
  null,
  { s: "О&бновить окно", w: 77, icon: "refresh", key: "Ctrl+W" },
  null,
  { s: "&1 добрятинский хлеб.cdr", w: 127 },
  { s: "&2 vyv borodinsk hleb.cdr", w: 118, check: true },
];

const PALETTE_MENU: Item[] = [
  { s: "&Нет", w: 19 },
  null,
  { s: "Палитра документа", w: 101, check: true },
  { s: "Добавить цвета из выбранного", w: 161, icon: "addSel", hot: true, off: true },
  { s: "Добавить цвета из документа", w: 155, icon: "addDoc", hot: true, off: true },
  null,
  { s: "Палитра CMYK по умолчанию", w: 148, check: true },
  { s: "Палитра документа", w: 101, check: true },
  null,
  { s: "Палитра по умолчанию", w: 118, check: true, hot: true },
  { s: "Палитра CMYK по умолчанию", w: 148, check: true },
  { s: "Палитра RGB по умолчанию", w: 141 },
  { s: "PANTONE® Goe™ coated", w: 125, hot: true },
  { s: "PANTONE® FASHION + HOME cotton selector", w: 223, hot: true },
  { s: "HKS® Colors", w: 62 },
  { s: "FOCOLTONE Colors", w: 94 },
  { s: "Дополнительные палитры...", w: 147, hot: true },
  null,
  { s: "&Открыть палитру...", w: 102, icon: "openPal" },
  null,
  { s: "Созда&ть палитру из выделения", w: 162, icon: "mkSel", off: true },
  { s: "Созд&ать палитру из документа", w: 160, icon: "mkDoc", off: true },
  null,
  { s: "&Редактор палитр...", w: 99, icon: "palEdit", hot: true },
];

function Menu({ items, c }: { items: Item[]; c: string }) {
  return (
    <div className={"absolute flex flex-col border border-[#a9a698] bg-white bg-linear-to-r from-[#fbfaf5] to-[#e9e4d0] bg-[length:24px_100%] bg-no-repeat " + c}>
      {items.map((it, i) => {
        if (!it) return <div key={i} className="flex h-[8px] shrink-0 items-center pr-[4px] pl-[27px]"><div className="h-px flex-1 bg-[#b9b6a8]" /></div>;
        const row = it.hot
          ? "my-px ml-[2px] mr-[2px] h-[20px] border border-[#edcf87] bg-[#fbe9c8]"
          : it.sel
            ? "z-10 ml-px mr-px h-[22px] border border-[#4a6aa5] bg-[#d4e0f5] pl-px"
            : "ml-[2px] mr-px h-[22px] border border-transparent";
        return (
          <div key={i} className={"flex shrink-0 items-center " + row}>
            <div className="-ml-px flex w-[33px] shrink-0 items-center">
              {it.icon && <Icon n={it.icon} className="ml-[1px] size-[18px]" />}
              {it.check && (
                <svg viewBox="0 0 20 20" className="size-[20px] shrink-0 border border-[#41669b] bg-[#f3f6fb]">
                  <path d="M5 10l3.500 4L14.500 6.500" fill="none" stroke="#3f8f35" strokeWidth="2.400" />
                </svg>
              )}
            </div>
            <T s={it.s} w={it.w} className={it.off ? "text-[#aaa79d]" : "text-[#1b1b22]"} />
            {it.key && <T s={it.key} w={35} className="ml-[37px]" />}
            {it.sub && (
              <svg viewBox="0 0 5 8" className="mr-[5px] ml-auto h-[8px] w-[5px]">
                <path d="M0 0l5 4-5 4z" />
              </svg>
            )}
          </div>
        );
      })}
    </div>
  );
}

/* ---------- side bars ---------- */

const TOOLS = "pick shape crop zoom freehand smart rect ellipse polygon basic textA table dimension connector blend dropper pen2 bucket bucket2".split(" ");
const HOT_TOOLS = ["freehand", "rect", "dimension", "connector", "dropper"];

function Toolbox() {
  return (
    <div className="flex w-[30px] shrink-0 flex-col items-center gap-[2px] border-r border-[#c6c2b0] pt-[4px]">
      <div className="mb-px flex w-[20px] justify-between">
        {[0, 1, 2, 3, 4, 5].map((i) => <div key={i} className="size-[2px] bg-[#b5b19e]" />)}
      </div>
      {TOOLS.map((n) => (
        <div key={n} className={"flex size-[24px] shrink-0 items-center justify-center " + (n === "pick" ? DOWN : HOT_TOOLS.includes(n) ? HOT : "")}>
          <Icon n={n} className="size-[18px]" />
        </div>
      ))}
    </div>
  );
}

const TABS: [string, string, number, string][] = [
  ["transform", "Преобразование", 85, "h-[113px]"],
  ["objects", "Диспетчер объектов", 103, "h-[132px]"],
  ["steps", "Перетекание", 66, "h-[94px]"],
  ["fillet", "Скругление/выемка/фаска", 136, "h-[164px]"],
];

function DockTabs() {
  return (
    <div className="flex w-[27px] shrink-0 flex-col items-center border-l border-[#c9c6b5] pr-[2px]">
      <svg viewBox="0 0 10 8" className="mt-[6px] mb-[12px] h-[8px] w-[10px] shrink-0">
        <path d="M4.500 0L1 4l3.500 4M9 0L5.500 4 9 8" fill="none" stroke="#444" strokeWidth="1.300" />
      </svg>
      {TABS.map(([icon, s, w, h]) => (
        <div key={s} className={"flex w-[21px] shrink-0 flex-col items-center gap-[4px] rounded-r-[5px] border border-[#c6c3b1] bg-[#e6e2cf] pt-[4px] pr-px text-[#6b695f] " + h}>
          <Icon n={icon} className="size-[16px]" />
          <T s={s} w={w} vertical className="[writing-mode:vertical-rl]" />
        </div>
      ))}
      <div className="mt-[2px] flex h-[172px] w-[21px] shrink-0 flex-col items-center gap-[3px] rounded-r-[5px] border border-[#c6c3b1] border-l-[#f4f2e8] bg-[#f4f2e8] pt-[3px]">
        <Icon n="lines" className="size-[16px]" />
        <T s="Форматирование абзаца" w={125} vertical className="[writing-mode:vertical-rl]" />
        <svg viewBox="0 0 8 8" className="mt-[6px] size-[8px] shrink-0">
          <path d="M1 1l6 6M7 1L1 7" stroke="#8f8c80" strokeWidth="1.800" />
        </svg>
      </div>
    </div>
  );
}

/* ---------- canvas bottom and status ---------- */

const Nav = ({ d, c }: { d: string; c: string }) => (
  <Slot c={c}>
    <svg viewBox="0 0 8 8" className="size-[8px]"><path d={d} fill="#8b897e" stroke="#8b897e" strokeWidth=".6" /></svg>
  </Slot>
);

function PageBar() {
  const btn = "flex h-[16px] w-[15px] shrink-0 items-center justify-center rounded-[2px] border border-white bg-[#c3d3fb]";
  return (
    <div className="flex h-[20px] shrink-0 items-center border-t border-[#b3b0a0]">
      <Slot c="w-[17px]"><Icon n="addPage" className="size-[13px]" /></Slot>
      <Nav c="w-[18px]" d="M0 0h1v8H0zM7 0v8L2 4z" />
      <Nav c="w-[18px]" d="M6 0v8L1 4z" />
      <T s="1 из 1" w={35} className="mr-[18px] ml-[16px] text-[12px]" />
      <Nav c="w-[18px]" d="M2 0v8l5-4z" />
      <Nav c="w-[16px]" d="M7 0h1v8H7zM1 0v8l5-4z" />
      <Slot c="w-[18px]"><Icon n="addPage" className="size-[13px]" /></Slot>
      <div className="ml-[2px] flex h-full w-[97px] items-center bg-[#aaa79a] pr-px [clip-path:polygon(0_0,91%_0,100%_60%,100%_100%,0_100%)]">
        <div className="flex h-full w-full items-center bg-white pl-[13px] text-[12px] [clip-path:polygon(0_0,91%_0,100%_60%,100%_100%,0_100%)]">
          <T s="Страница 1" w={67} />
        </div>
      </div>
      <div className="mr-[3px] ml-auto h-[13px] border-l-2 border-dotted border-[#aaa798]" />
      <div className="flex h-[18px] w-[582px] shrink-0 items-center justify-between bg-[#f3f1ec]">
        <div className={btn}><svg viewBox="0 0 6 9" className="h-[9px] w-[6px]"><path d="M5 1L1.500 4.500 5 8" fill="none" stroke="#4d6185" strokeWidth="2" /></svg></div>
        <div className="flex h-[15px] w-[547px] shrink-0 items-center justify-center gap-px rounded-[2px] border border-[#a9bff2] bg-[#c5d5fc]">
          {[0, 1, 2, 3].map((i) => <div key={i} className="h-[6px] w-px bg-[#8fa8e4]" />)}
        </div>
        <div className={btn}><svg viewBox="0 0 6 9" className="h-[9px] w-[6px]"><path d="M1 1l3.500 3.500L1 8" fill="none" stroke="#4d6185" strokeWidth="2" /></svg></div>
      </div>
      <Slot c="w-[18px]"><Icon n="loupe" className="size-[14px]" /></Slot>
    </div>
  );
}

function VScroll() {
  const btn = "flex h-[16px] w-[15px] shrink-0 items-center justify-center rounded-[2px] border border-white bg-[#c3d3fb]";
  return (
    <div className="flex w-[18px] flex-col items-center bg-[#f5f3ee] pr-[2px]">
      <div className={btn}><Chevron up /></div>
      <div className="mt-[2px] flex h-[463px] w-[14px] shrink-0 flex-col items-center justify-center gap-px rounded-[2px] border border-[#a9bff2] bg-[#c5d5fc]">
        {[0, 1, 2, 3].map((i) => <div key={i} className="h-px w-[6px] bg-[#8fa8e4]" />)}
      </div>
      <div className={"mt-auto " + btn}><Chevron /></div>
    </div>
  );
}

function StatusBar() {
  return (
    <div className="flex h-[44px] shrink-0 flex-col border-t border-white bg-[#ece9d8]">
      <div className="flex h-[22px] items-center pl-[4px]">
        <T s="( 563,432; 499,645 )" w={102} />
        <div className={"ml-[9px] flex h-[15px] w-[14px] items-center justify-center " + HOT}>
          <svg viewBox="0 0 4 8" className="h-[8px] w-[4px]"><path d="M0 0l4 4-4 4z" /></svg>
        </div>
        <Icon n="monitor" className="ml-auto size-[17px]" />
        <div className="mx-[17px] h-[16px] w-px bg-[#c9c5b2]" />
        <Icon n="bucketS" className="-ml-[7px] size-[16px]" />
        <svg viewBox="0 0 18 18" className="mr-[170px] ml-[6px] size-[18px]">
          <path d="M.5.5h17v17H.5zM1 1l16 16M17 1L1 17" fill="#fff" stroke="#222" />
        </svg>
      </div>
      <div className="flex h-[20px] items-center pl-[4px]">
        <T
          s="Следующий щелчок - перетаскивание/масштабирование; второй щелчок - поворот/наклон; инструмент с двойным щелчком выбирает все объекты; Shift+щелчок - выбор нескольких элементов; Alt+щел..."
          w={1058}
        />
        <Icon n="penS" className="mr-[7px] ml-auto h-[16px] w-[14px]" />
        <div className="mr-[170px] size-[17px] bg-black" />
      </div>
    </div>
  );
}

/* ---------- red marker notes ---------- */

function Notes() {
  return (
    <svg viewBox="0 0 1280 965" className="pointer-events-none absolute inset-0 h-[965px] w-[1280px]" fill="none" stroke="#fb0007" strokeWidth="2.900" strokeLinecap="round" strokeLinejoin="round">
      <path d="M92 528L77 537 72 550 69 562 69 580 71 594 75 601 80 602" />
      <path d="M97 526L88 523 90 531 95 532z" fill="#fb0007" />
      <path d="M92 645L80 635 68 623 52 597 45 575 36 548 33 522 33 502 36 462 42 438 49 415 52 402 53 363 58 350 65 332 70 326 90 317" />
      <path d="M100 313L91 311 92 316 96 323z" fill="#fb0007" />
      <path d="M119 657L147 648 180 643 203 630 230 615 250 602 262 586 275 568 293 540 306 520" />
      <path d="M309.500 510L303 518 311 521z" fill="#fb0007" />
      <path d="M114 749L130 743 170 730 230 705 283 680 330 650 376 612 402 600 433 565 463 535 478 512 491 485 492 468 492 377 483 355 483 342 476 330 468 316" />
      <path d="M467 306L465 315 472 316z" fill="#fb0007" />
      <path d="M82 600C90 597 99 600 98 610 98 619 88 622 80 619 74 616 74 603 82 600z" />
      <path d="M97 635C106 630 116 634 115 643 114 651 106 654 99 650 92 646 91 640 97 635z" />
      <path d="M97 656C104 652 118 653 119 657 118 663 109 666 100 665 94 664 92 659 97 656z" />
      <path d="M98 743C106 740 114 743 114 750 114 760 112 769 104 769 96 767 88 752 98 743z" />
      <path d="M1115 153L1098 160 1083 170 1073 181 1066 187 1059 197" />
      <circle cx="1057.500" cy="197.500" r="5" fill="#fb0007" />
      <path d="M1138 145L1131 139Q1140 134 1145 138 1147 144 1138 149L1135 154 1136 160M1135.500 170v.500" />
      <path d="M1156 226L1142 231 1128 240 1116 250 1112 257 1106 265" />
      <circle cx="1103" cy="268" r="5" fill="#fb0007" />
      <path d="M1169 219L1166 211 1177 207 1187 211Q1190 218 1180 223L1176 226 1176 231M1174 245h.500" />
      <path d="M1158 266L1143 271 1132 277 1122 284 1106 291" />
      <circle cx="1103" cy="289.500" r="5" fill="#fb0007" />
      <path d="M1173 264L1183 256Q1192 252 1191 259 1188 265 1178 270L1175 276 1177 285" />
      <path d="M1155 308L1144 309 1129 315 1112 321" />
      <ellipse cx="1104" cy="322" rx="8.500" ry="5.500" fill="#fb0007" />
      <path d="M1169 305Q1171 297 1178 299 1180 304 1175 309L1173 316M1171 329v.500" />
    </svg>
  );
}

/* ---------- page ---------- */

export default function App() {
  return (
    <div className="relative flex h-[965px] w-[1280px] flex-col overflow-hidden bg-[#ece9d8] text-[11px] leading-[14px] text-[#1b1b22] [font-family:'DejaVu_Sans_Condensed','DejaVu_Sans',sans-serif] [font-stretch:condensed]">
      <div className="h-[2px] shrink-0 bg-[#0c49d4]" />
      <MenuBar />
      <Toolbar />
      <PropertyBar />
      <div className="flex min-h-0 flex-1">
        <Toolbox />
        <div className="flex w-[1223px] shrink-0 flex-col">
          <RulerH />
          <div className="flex min-h-0 flex-1">
            <RulerV />
            <div className="flex min-w-0 flex-1 flex-col">
              <div className="flex min-h-0 flex-1">
                <div className="flex-1 bg-white pt-[390px]">
                  <div className="h-full w-[38px] border-t border-r-[7px] border-t-[#999] border-r-[#c4c2be]" />
                </div>
                <VScroll />
              </div>
              <PageBar />
            </div>
          </div>
        </div>
        <DockTabs />
      </div>
      <StatusBar />

      <PaletteWindow title="Палитра CMYK по умолчанию" tw={170} colors={CMYK} c="top-[130px] left-[60px] w-[213px]" />
      <PaletteWindow title="По умолчанию: Палитра по умолч..." tw={206} colors={CMYK} c="top-[130px] left-[277px] w-[230px]" dim />
      <PaletteWindow title="Палитра документа" tw={118} colors={DOC_A} c="top-[345px] left-[64px] w-[196px]" />
      <PaletteWindow title="Палитра документа" tw={118} colors={DOC_B} c="top-[345px] left-[271px] w-[196px]" />
      <Browser />
      <Menu items={WINDOW_MENU} c="top-[23px] left-[691px] h-[332px] w-[208px] pt-[2px]" />
      <Menu items={PALETTE_MENU} c="top-[151px] left-[897px] h-[450px] w-[297px] pt-[2px]" />
      <Notes />
    </div>
  );
}
